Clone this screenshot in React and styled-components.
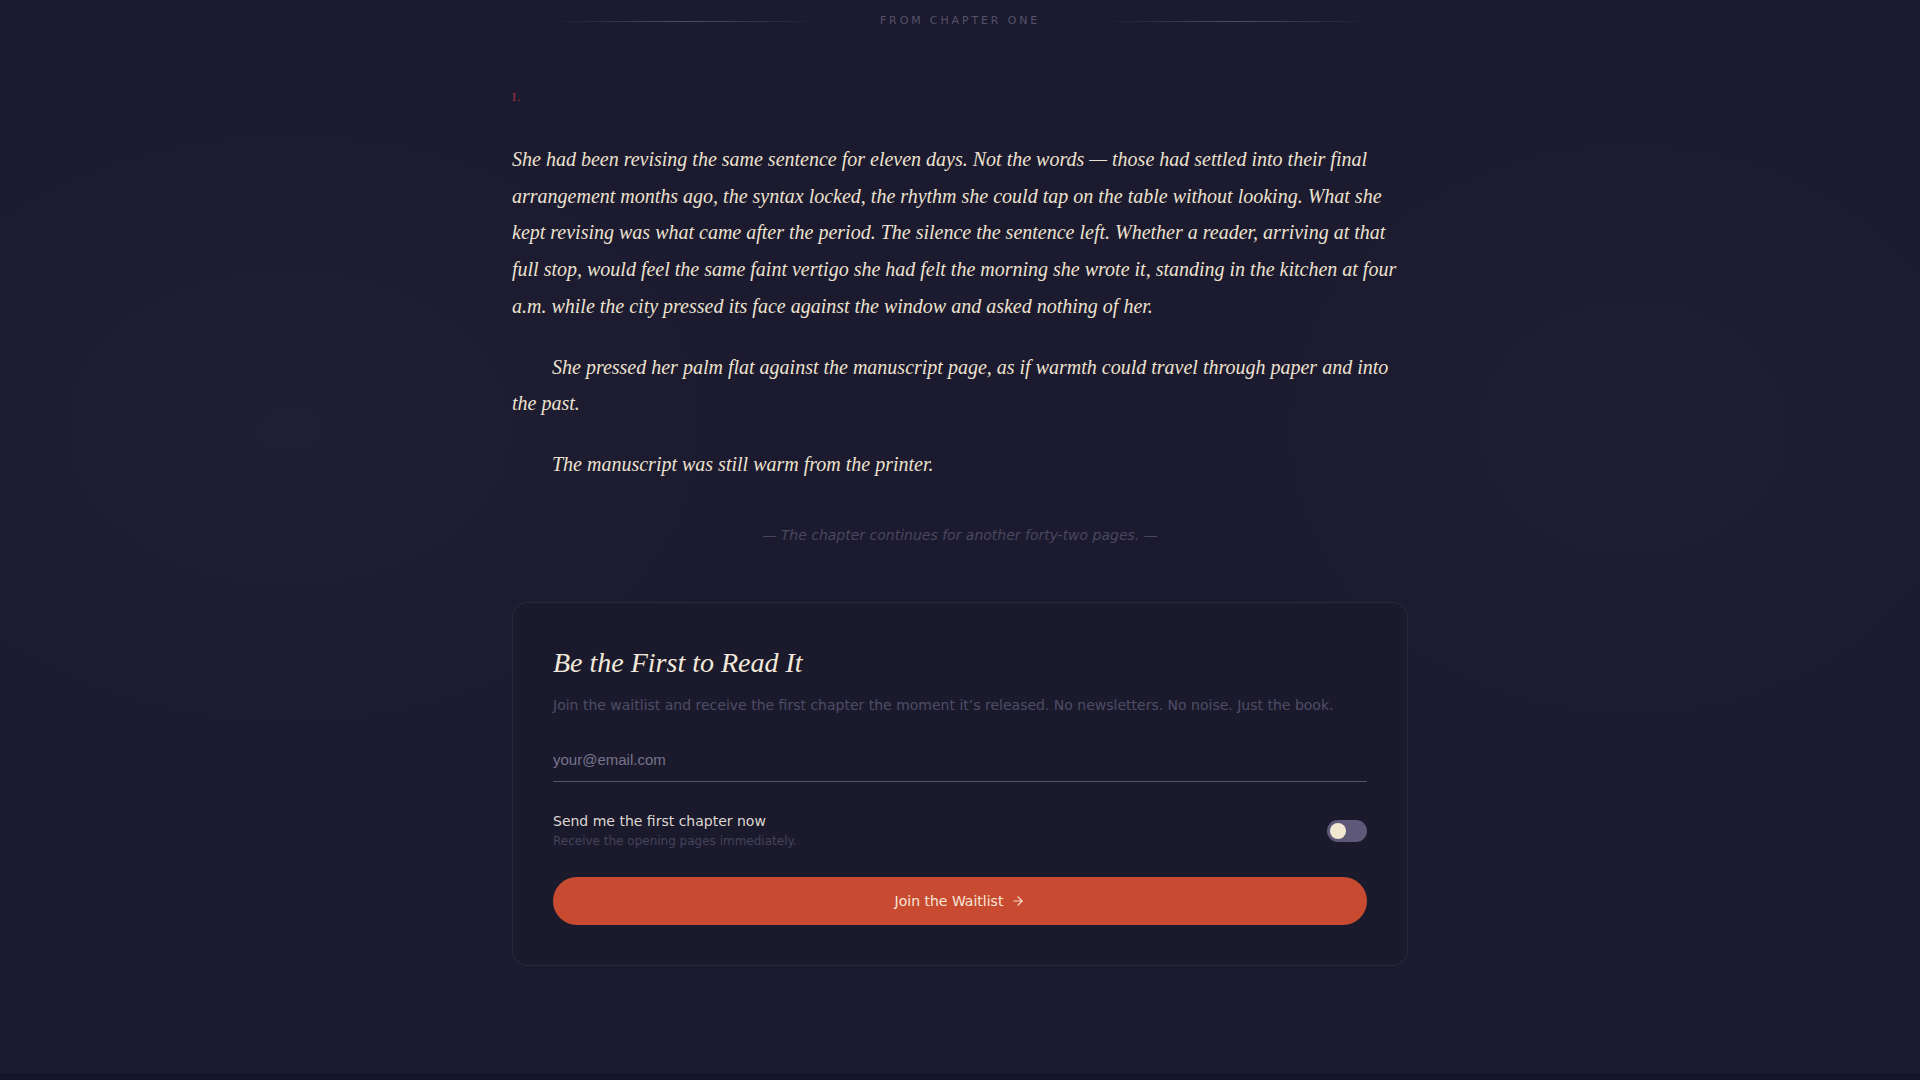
import React, { useState } from "react";
import styled, { createGlobalStyle } from "styled-components";
import { ArrowRight } from "lucide-react";

const GlobalStyle = createGlobalStyle`
  html, body {
    margin: 0;
    padding: 0;
    background: #16142a;
  }
  * { box-sizing: border-box; }
`;

const Page = styled.div`
  min-height: 1073px;
  background:
    radial-gradient(ellipse 700px 500px at 15% 40%, rgba(40, 38, 62, 0.35), transparent 70%),
    radial-gradient(ellipse 600px 500px at 85% 40%, rgba(40, 38, 62, 0.3), transparent 70%),
    #1c1a2e;
  padding: 13px 0 80px;
`;

const Column = styled.main`
  width: 896px;
  margin: 0 auto;
`;

const Kicker = styled.div`
  display: flex;
  align-items: center;
  gap: 24px;
`;

const KickerLine = styled.span`
  flex: 1;
  height: 1px;
  background: linear-gradient(
    90deg,
    transparent 12%,
    rgba(120, 116, 150, 0.55) 50%,
    transparent 90%
  );
`;

const KickerText = styled.span`
  font-family: "DejaVu Sans", sans-serif;
  font-size: 11px;
  line-height: 16px;
  letter-spacing: 0.26em;
  text-transform: uppercase;
  color: #54516c;
`;

const Marker = styled.div`
  margin-top: 60px;
  font-family: "Liberation Serif", serif;
  font-size: 12px;
  line-height: 16px;
  color: #a8384c;
  letter-spacing: 0.1em;
`;

const Prose = styled.div`
  margin-top: 36px;
`;

const Para = styled.p`
  margin: 0 0 24px;
  font-family: "Liberation Serif", serif;
  font-style: italic;
  font-size: 20px;
  line-height: 36.7px;
  color: #ece2d0;
  text-indent: ${(p) => (p.$indent ? "2em" : "0")};
`;

const Note = styled.p`
  margin: 42px 0 0;
  text-align: center;
  font-family: "DejaVu Sans", sans-serif;
  font-style: italic;
  font-size: 14px;
  line-height: 20px;
  color: #4a475f;
`;

const Card = styled.section`
  margin-top: 57px;
  padding: 40px;
  border: 1px solid rgba(120, 116, 150, 0.16);
  border-radius: 16px;
  background: #1b1a2c;
`;

const Title = styled.h2`
  margin: 0;
  font-family: "Liberation Serif", serif;
  font-style: italic;
  font-weight: 400;
  font-size: 28px;
  line-height: 40px;
  color: #f2e9da;
`;

const Lead = styled.p`
  margin: 12px 0 0;
  font-family: "DejaVu Sans", sans-serif;
  font-size: 14px;
  line-height: 21px;
  color: #4f4c66;
`;

const EmailInput = styled.input`
  display: block;
  width: 100%;
  margin-top: 23px;
  padding: 12px 0;
  border: 0;
  border-bottom: 1px solid #56526c;
  background: transparent;
  font-family: "Liberation Sans", sans-serif;
  font-size: 15px;
  line-height: 18px;
  color: #e8e0d0;
  outline: none;

  &::placeholder {
    color: #77738c;
  }
`;

const OptionRow = styled.div`
  margin-top: 30px;
  display: flex;
  align-items: center;
  justify-content: space-between;
`;

const OptionText = styled.div`
  display: flex;
  flex-direction: column;
  gap: 2px;
`;

const OptionLabel = styled.span`
  font-family: "DejaVu Sans", sans-serif;
  font-size: 14px;
  line-height: 19px;
  color: #ddd6d0;
`;

const OptionHint = styled.span`
  font-family: "DejaVu Sans", sans-serif;
  font-size: 12px;
  line-height: 17px;
  color: #45425a;
`;

const Switch = styled.button`
  position: relative;
  width: 40px;
  height: 22px;
  padding: 0;
  border: 0;
  border-radius: 11px;
  background: ${(p) => (p.$on ? "#c84b31" : "#5e5879")};
  cursor: pointer;

  &::after {
    content: "";
    position: absolute;
    top: 3px;
    left: ${(p) => (p.$on ? "21px" : "3px")};
    width: 16px;
    height: 16px;
    border-radius: 50%;
    background: #f2e8d2;
    transition: left 0.2s;
  }
`;

const Submit = styled.button`
  margin-top: 27px;
  width: 100%;
  height: 48px;
  border: 0;
  border-radius: 24px;
  background: #c84b31;
  color: #f6e6d8;
  font-family: "DejaVu Sans", sans-serif;
  font-size: 14px;
  display: flex;
  align-items: center;
  justify-content: center;
  gap: 8px;
  cursor: pointer;
`;

export default function App() {
  const [sendNow, setSendNow] = useState(false);

  return (
    <>
      <GlobalStyle />
      <Page>
        <Column>
          <Kicker>
            <KickerLine />
            <KickerText>From Chapter One</KickerText>
            <KickerLine />
          </Kicker>

          <Marker>I.</Marker>

          <Prose>
            <Para>
              She had been revising the same sentence for eleven days. Not the words — those had
              settled into their final arrangement months ago, the syntax locked, the rhythm she could
              tap on the table without looking. What she kept revising was what came after the period.
              The silence the sentence left. Whether a reader, arriving at that full stop, would feel
              the same faint vertigo she had felt the morning she wrote it, standing in the kitchen at
              four a.m. while the city pressed its face against the window and asked nothing of her.
            </Para>
            <Para $indent>
              She pressed her palm flat against the manuscript page, as if warmth could travel through
              paper and into the past.
            </Para>
            <Para $indent>The manuscript was still warm from the printer.</Para>
          </Prose>

          <Note>— The chapter continues for another forty-two pages. —</Note>

          <Card>
            <Title>Be the First to Read It</Title>
            <Lead>
              Join the waitlist and receive the first chapter the moment it’s released. No newsletters.
              No noise. Just the book.
            </Lead>
            <EmailInput type="email" placeholder="your@email.com" />
            <OptionRow>
              <OptionText>
                <OptionLabel>Send me the first chapter now</OptionLabel>
                <OptionHint>Receive the opening pages immediately.</OptionHint>
              </OptionText>
              <Switch
                type="button"
                role="switch"
                aria-checked={sendNow}
                $on={sendNow}
                onClick={() => setSendNow(!sendNow)}
              />
            </OptionRow>
            <Submit type="button">
              Join the Waitlist
              <ArrowRight size={14} strokeWidth={2} />
            </Submit>
          </Card>
        </Column>
      </Page>
    </>
  );
}
